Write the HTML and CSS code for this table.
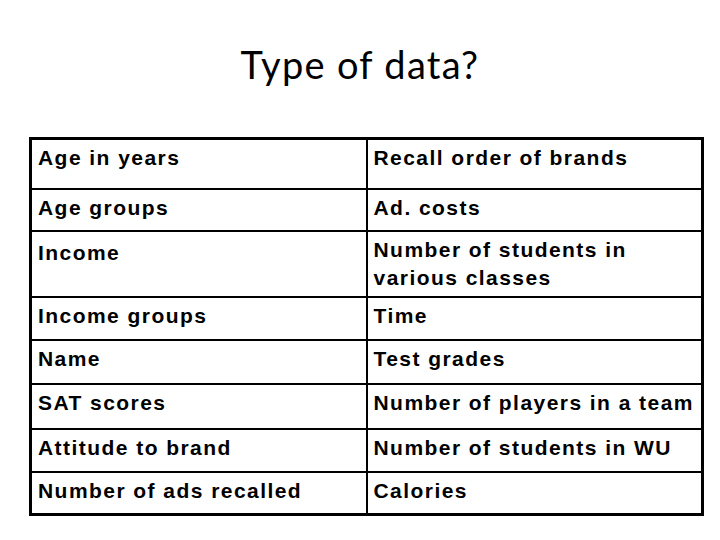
FILE: index.html
```html
<!DOCTYPE html>
<html>
<head>
<meta charset="utf-8">
<link rel="stylesheet" href="styles.css">
</head>
<body>
<div class="slide">
  <h1 class="title">Type of data?</h1>
  <table class="data">
    <tr class="r1"><td>Age in years</td><td>Recall order of brands</td></tr>
    <tr class="r2"><td>Age groups</td><td>Ad. costs</td></tr>
    <tr class="r3"><td class="low">Income</td><td class="two">Number of students in<br>various classes</td></tr>
    <tr class="r4"><td>Income groups</td><td>Time</td></tr>
    <tr class="r5"><td>Name</td><td>Test grades</td></tr>
    <tr class="r6"><td>SAT scores</td><td>Number of players in a team</td></tr>
    <tr class="r7"><td>Attitude to brand</td><td>Number of students in WU</td></tr>
    <tr class="r8"><td>Number of ads recalled</td><td>Calories</td></tr>
  </table>
</div>
</body>
</html>
```
FILE: styles.css
```css
html, body {
  margin: 0;
  padding: 0;
  background: #ffffff;
}
.slide {
  width: 720px;
  height: 540px;
  padding-top: 42px;
  box-sizing: border-box;
}
.title {
  margin: 0;
  font-family: "Lato", "Open Sans", sans-serif;
  font-weight: 400;
  font-size: 38px;
  letter-spacing: 1.3px;
  line-height: 44px;
  text-align: center;
  color: #000;
}
.data {
  margin: 51px 0 0 29px;
  width: 675px;
  border-collapse: collapse;
  border: 3px solid #000;
  table-layout: fixed;
  font-family: "Liberation Sans", Arial, sans-serif;
  font-weight: 700;
  font-size: 21px;
  letter-spacing: 1.45px;
  color: #000;
}
.data td {
  border: 2px solid #000;
  vertical-align: top;
  padding: 4px 2px 0 6px;
  line-height: 27px;
  width: 50%;
  box-sizing: border-box;
  white-space: nowrap;
}
.data td.low { padding-top: 7px; }
.data td.two { padding-top: 4px; line-height: 28px; }
.r1 td { height: 50px; }
.r2 td { height: 42px; }
.r3 td { height: 66px; }
.r4 td { height: 43px; }
.r5 td { height: 44px; }
.r6 td { height: 45px; }
.r7 td { height: 43px; }
.r8 td { height: 43px; }
```
